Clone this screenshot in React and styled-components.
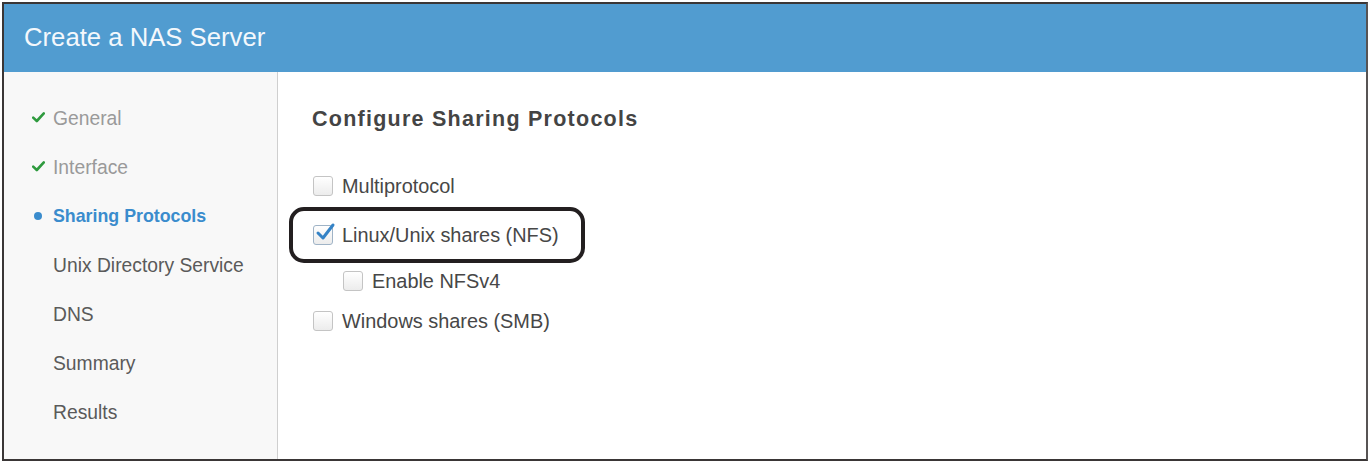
import React from 'react';
import styled, { createGlobalStyle } from 'styled-components';

const GlobalStyle = createGlobalStyle`
  html, body {
    margin: 0;
    padding: 0;
    background: #ffffff;
    font-family: "Liberation Sans", Arial, sans-serif;
  }
`;

const steps = [
  { label: 'General', state: 'done' },
  { label: 'Interface', state: 'done' },
  { label: 'Sharing Protocols', state: 'current' },
  { label: 'Unix Directory Service', state: 'todo' },
  { label: 'DNS', state: 'todo' },
  { label: 'Summary', state: 'todo' },
  { label: 'Results', state: 'todo' },
];

export default function App() {
  return (
    <>
      <GlobalStyle />
      <Page>
        <Frame>
          <Header>
            <Title>Create a NAS Server</Title>
          </Header>
          <Body>
            <Sidebar>
              {steps.map((s) => (
                <Step key={s.label} state={s.state}>
                  <StepIcon>
                    {s.state === 'done' && <Tick />}
                    {s.state === 'current' && <Dot />}
                  </StepIcon>
                  {s.label}
                </Step>
              ))}
            </Sidebar>
            <Main>
              <Heading>Configure Sharing Protocols</Heading>
              <Options>
                <Option>
                  <Box />
                  <Label>Multiprotocol</Label>
                </Option>
                <Highlight>
                  <Option>
                    <Box checked>
                      <CheckSvg />
                    </Box>
                    <Label>Linux/Unix shares (NFS)</Label>
                  </Option>
                </Highlight>
                <Option nested>
                  <Box />
                  <Label>Enable NFSv4</Label>
                </Option>
                <Option spaced>
                  <Box />
                  <Label>Windows shares (SMB)</Label>
                </Option>
              </Options>
            </Main>
          </Body>
        </Frame>
      </Page>
    </>
  );
}

function Tick() {
  return (
    <svg width="13" height="11" viewBox="0 0 13 11">
      <path d="M1.2 5.6 L4.8 9 L11.8 1.4" fill="none" stroke="#2e9a3e" strokeWidth="2.6" strokeLinecap="round" strokeLinejoin="round" />
    </svg>
  );
}

function CheckSvg() {
  return (
    <svg width="22" height="20" viewBox="0 0 22 20" style={{ position: 'absolute', left: 1, top: -4 }}>
      <path d="M3 11 L8 16 L18 3" fill="none" stroke="#3583c6" strokeWidth="3" strokeLinecap="round" strokeLinejoin="round" />
    </svg>
  );
}

const Page = styled.div`
  padding: 2px 2px 0 2px;
  width: 1370px;
  box-sizing: border-box;
`;

const Frame = styled.div`
  border: 2px solid #3a3636;
  border-right-color: #575454;
  height: 459px;
  box-sizing: border-box;
  display: flex;
  flex-direction: column;
`;

const Header = styled.div`
  height: 68px;
  background: #519cd0;
  display: flex;
  align-items: center;
  padding-left: 20px;
  flex-shrink: 0;
`;

const Title = styled.div`
  color: #f4f8fc;
  font-size: 25.7px;
  margin-top: -2px;
`;

const Body = styled.div`
  flex: 1;
  display: flex;
`;

const Sidebar = styled.div`
  width: 273px;
  background: #f8f8f8;
  border-right: 1px solid #cfcfcf;
  padding-top: 22px;
  box-sizing: content-box;
`;

const Step = styled.div`
  height: 49px;
  display: flex;
  align-items: center;
  padding-left: 28px;
  font-size: ${(p) => (p.state === 'current' ? '17.8px' : '19.3px')};
  font-weight: ${(p) => (p.state === 'current' ? 'bold' : 'normal')};
  color: ${(p) =>
    p.state === 'current' ? '#3a8ccd' : p.state === 'done' ? '#9a9a9a' : '#5a5a5a'};
`;

const StepIcon = styled.span`
  width: 21px;
  display: flex;
  align-items: center;
  margin-top: -3px;
`;

const Dot = styled.span`
  width: 8px;
  height: 8px;
  border-radius: 50%;
  background: #3a8ccd;
  margin-left: 2px;
  margin-top: 2px;
`;

const Main = styled.div`
  flex: 1;
  padding: 32px 0 0 34px;
`;

const Heading = styled.div`
  height: 30px;
  line-height: 30px;
  font-size: 21.5px;
  font-weight: bold;
  letter-spacing: 1.25px;
  color: #444444;
`;

const Options = styled.div`
  margin-top: 32px;
  display: flex;
  flex-direction: column;
  align-items: flex-start;
`;

const Option = styled.div`
  display: flex;
  align-items: center;
  height: ${(p) => (p.nested ? '36px' : '40px')};
  margin-left: ${(p) => (p.nested ? '30px' : '0')};
  margin-top: ${(p) => (p.spaced ? '2px' : '0')};
`;

const Highlight = styled.div`
  margin-top: 1px;
  margin-left: -23px;
  border: 4px solid #231f20;
  border-radius: 15px;
  padding: 4px 22px 4px 19px;
`;

const Box = styled.span`
  position: relative;
  width: 18px;
  height: 18px;
  margin-left: 1px;
  border: 1px solid ${(p) => (p.checked ? '#9fb3c6' : '#c4c4c4')};
  border-radius: 3px;
  background: linear-gradient(#ffffff, #ececec);
  flex-shrink: 0;
`;

const Label = styled.span`
  margin-left: 9px;
  font-size: 19.9px;
  color: #474747;
`;
